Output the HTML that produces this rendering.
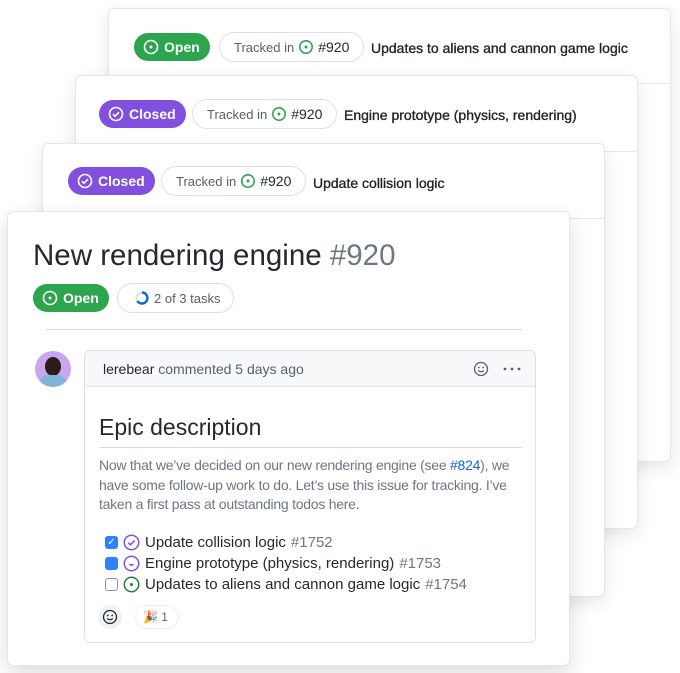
<!DOCTYPE html>
<html><head><meta charset="utf-8"><style>
*{box-sizing:border-box;margin:0;padding:0}
body{width:680px;height:673px;background:#fff;font-family:"Liberation Sans",sans-serif;position:relative;overflow:hidden;color:#24292f}
.card{position:absolute;width:563px;height:454px;background:#fff;border:1px solid #e4e6e9;border-radius:6px;box-shadow:0 6px 18px rgba(0,0,0,.10)}
.card .hd{position:absolute;left:0;right:0;top:0;height:68px;border-bottom:1px solid #e6e8eb}
.badge{position:absolute;top:24px;height:28px;border-radius:14px;color:#fff;font-weight:bold;font-size:14px;display:flex;align-items:center;padding:0 10px 0 9px;gap:5px}
.open{background:#2da44e}.closed{background:#8250df}
.pill{position:absolute;top:23px;height:30px;border:1px solid #dde0e4;border-radius:15px;display:flex;align-items:center;padding:0 14px;font-size:13px;color:#57606a;gap:4px}
.pill b{color:#24292f;font-size:14px;font-weight:normal}
.ttl{position:absolute;top:30px;font-size:14px;font-weight:normal;color:#1f2328;-webkit-text-stroke:0.35px #1f2328}
</style></head><body>

<div class="card" style="left:108px;top:8px">
 <div class="hd" style="height:75px"></div>
 <div class="badge open" style="left:25px;top:24px"><svg width="16" height="16" viewBox="0 0 16 16"><circle cx="8" cy="8" r="6.5" fill="none" stroke="#fff" stroke-width="1.6"/><circle cx="8" cy="8" r="1.5" fill="#fff"/></svg>Open</div>
 <div class="pill" style="left:110px">Tracked in <svg width="16" height="16" viewBox="0 0 16 16"><circle cx="8" cy="8" r="6.2" fill="none" stroke="#2da44e" stroke-width="1.6"/><circle cx="8" cy="8" r="1.5" fill="#2da44e"/></svg><b>#920</b></div>
 <div class="ttl" style="left:262px;top:31px">Updates to aliens and cannon game logic</div>
</div>

<div class="card" style="left:75px;top:75px">
 <div class="hd" style="height:76px"></div>
 <div class="badge closed" style="left:23px;top:24px"><svg width="16" height="16" viewBox="0 0 16 16"><circle cx="8" cy="8" r="6.5" fill="none" stroke="#fff" stroke-width="1.6"/><path d="M5 8.2l2 2 4-4" fill="none" stroke="#fff" stroke-width="1.6"/></svg>Closed</div>
 <div class="pill" style="left:116px">Tracked in <svg width="16" height="16" viewBox="0 0 16 16"><circle cx="8" cy="8" r="6.2" fill="none" stroke="#2da44e" stroke-width="1.6"/><circle cx="8" cy="8" r="1.5" fill="#2da44e"/></svg><b>#920</b></div>
 <div class="ttl" style="left:268px;top:31px">Engine prototype (physics, rendering)</div>
</div>

<div class="card" style="left:42px;top:143px">
 <div class="hd" style="height:75px"></div>
 <div class="badge closed" style="left:25px;top:23px"><svg width="16" height="16" viewBox="0 0 16 16"><circle cx="8" cy="8" r="6.5" fill="none" stroke="#fff" stroke-width="1.6"/><path d="M5 8.2l2 2 4-4" fill="none" stroke="#fff" stroke-width="1.6"/></svg>Closed</div>
 <div class="pill" style="left:118px;top:22px">Tracked in <svg width="16" height="16" viewBox="0 0 16 16"><circle cx="8" cy="8" r="6.2" fill="none" stroke="#2da44e" stroke-width="1.6"/><circle cx="8" cy="8" r="1.5" fill="#2da44e"/></svg><b>#920</b></div>
 <div class="ttl" style="left:270px;top:31px">Update collision logic</div>
</div>

<div class="card" style="left:7px;top:211px;height:455px;box-shadow:0 8px 22px rgba(0,0,0,.14)">
 <div style="position:absolute;left:25px;top:27px;font-size:29.5px;color:#24292f">New rendering engine <span style="color:#6e7781">#920</span></div>
 <div class="badge open" style="left:25px;top:72px"><svg width="16" height="16" viewBox="0 0 16 16"><circle cx="8" cy="8" r="6.5" fill="none" stroke="#fff" stroke-width="1.6"/><circle cx="8" cy="8" r="1.5" fill="#fff"/></svg>Open</div>
 <div class="pill" style="left:109px;top:71px;height:30px;padding:0 13px 0 16px"><svg width="16" height="16" viewBox="0 0 16 16"><circle cx="8" cy="8" r="5.5" fill="none" stroke="#e1e4e8" stroke-width="2.4"/><path d="M8 2.5A5.5 5.5 0 1 1 3.3 11" fill="none" stroke="#0969da" stroke-width="2.4"/></svg> 2 of 3 tasks</div>
 <div style="position:absolute;left:38px;top:117px;width:476px;height:1px;background:#d8dbdf"></div>
 <div style="position:absolute;left:27px;top:139px;width:36px;height:36px;border-radius:50%;background:#c9a6ef;overflow:hidden"><div style="position:absolute;left:10px;top:6px;width:16px;height:19px;border-radius:50%;background:#2b1d16"></div><div style="position:absolute;left:5px;top:24px;width:26px;height:14px;border-radius:8px 8px 0 0;background:#7fb6d6"></div></div>
 <div style="position:absolute;left:76px;top:138px;width:452px;height:293px;border:1px solid #dfe2e5;border-radius:6px;overflow:hidden">
  <div style="height:36px;background:#f6f8fa;border-bottom:1px solid #e1e4e8;display:flex;align-items:center;padding-left:18px;font-size:14px;color:#57606a"><b style="color:#24292f;font-weight:normal">lerebear</b>&nbsp;commented 5 days ago
   <svg style="position:absolute;left:388px;top:10px" width="16" height="16" viewBox="0 0 16 16"><circle cx="8" cy="8" r="6.5" fill="none" stroke="#57606a" stroke-width="1.3"/><circle cx="5.8" cy="6.5" r=".9" fill="#57606a"/><circle cx="10.2" cy="6.5" r=".9" fill="#57606a"/><path d="M5.2 9.5q2.8 2.6 5.6 0" fill="none" stroke="#57606a" stroke-width="1.2"/></svg>
   <svg style="position:absolute;left:418px;top:16px" width="18" height="4" viewBox="0 0 18 4"><circle cx="2" cy="2" r="1.4" fill="#57606a"/><circle cx="9" cy="2" r="1.4" fill="#57606a"/><circle cx="16" cy="2" r="1.4" fill="#57606a"/></svg>
  </div>
  <div style="position:absolute;left:14px;top:63px;font-size:23px;color:#24292f">Epic description</div>
  <div style="position:absolute;left:14px;top:96px;width:424px;height:1px;background:#d8dbdf"></div>
  <div style="position:absolute;left:14px;top:105px;width:430px;font-size:14px;line-height:19.5px;color:#6e7781;letter-spacing:-0.25px">Now that we’ve decided on our new rendering engine (see <span style="color:#0969da">#824</span>), we have some follow-up work to do. Let’s use this issue for tracking. I’ve taken a first pass at outstanding todos here.</div>
  <div style="position:absolute;left:20px;top:181px;font-size:15px;line-height:21px;color:#24292f">
   <div style="display:flex;align-items:center;gap:5px"><span style="width:13px;height:13px;border-radius:3px;background:#2f81f7;color:#fff;font-size:10px;line-height:13px;text-align:center">✓</span><svg width="17" height="17" viewBox="0 0 16 16"><circle cx="8" cy="8" r="6.8" fill="none" stroke="#8250df" stroke-width="1.4"/><path d="M5 8.2l2 2 4-4" fill="none" stroke="#8250df" stroke-width="1.4"/></svg>Update collision logic <span style="color:#6e7781">#1752</span></div>
   <div style="display:flex;align-items:center;gap:5px"><span style="width:13px;height:13px;border-radius:3px;background:#2f81f7"></span><svg width="17" height="17" viewBox="0 0 16 16"><circle cx="8" cy="8" r="6.8" fill="none" stroke="#8250df" stroke-width="1.4"/><path d="M6 8.5q2 2 4 0" fill="none" stroke="#8250df" stroke-width="1.4"/></svg>Engine prototype (physics, rendering) <span style="color:#6e7781">#1753</span></div>
   <div style="display:flex;align-items:center;gap:5px"><span style="width:13px;height:13px;border-radius:3px;border:1px solid #8c959f"></span><svg width="17" height="17" viewBox="0 0 16 16"><circle cx="8" cy="8" r="6.8" fill="none" stroke="#1a7f37" stroke-width="1.4"/><circle cx="8" cy="8" r="1.4" fill="#1a7f37"/></svg>Updates to aliens and cannon game logic <span style="color:#6e7781">#1754</span></div>
  </div>
  <div style="position:absolute;left:13px;top:254px;width:24px;height:24px;border-radius:50%;background:#eff1f3;display:flex;align-items:center;justify-content:center"><svg width="16" height="16" viewBox="0 0 16 16"><circle cx="8" cy="8" r="6.5" fill="none" stroke="#24292f" stroke-width="1.3"/><circle cx="5.8" cy="6.5" r=".9" fill="#24292f"/><circle cx="10.2" cy="6.5" r=".9" fill="#24292f"/><path d="M5.2 9.5q2.8 2.6 5.6 0" fill="none" stroke="#24292f" stroke-width="1.2"/></svg></div>
  <div style="position:absolute;left:50px;top:254px;width:44px;height:24px;border:1px solid #eceef0;border-radius:12px;font-size:12px;color:#57606a;display:flex;align-items:center;padding-left:7px;gap:3px">🎉 1</div>
 </div>
</div>
</body></html>
